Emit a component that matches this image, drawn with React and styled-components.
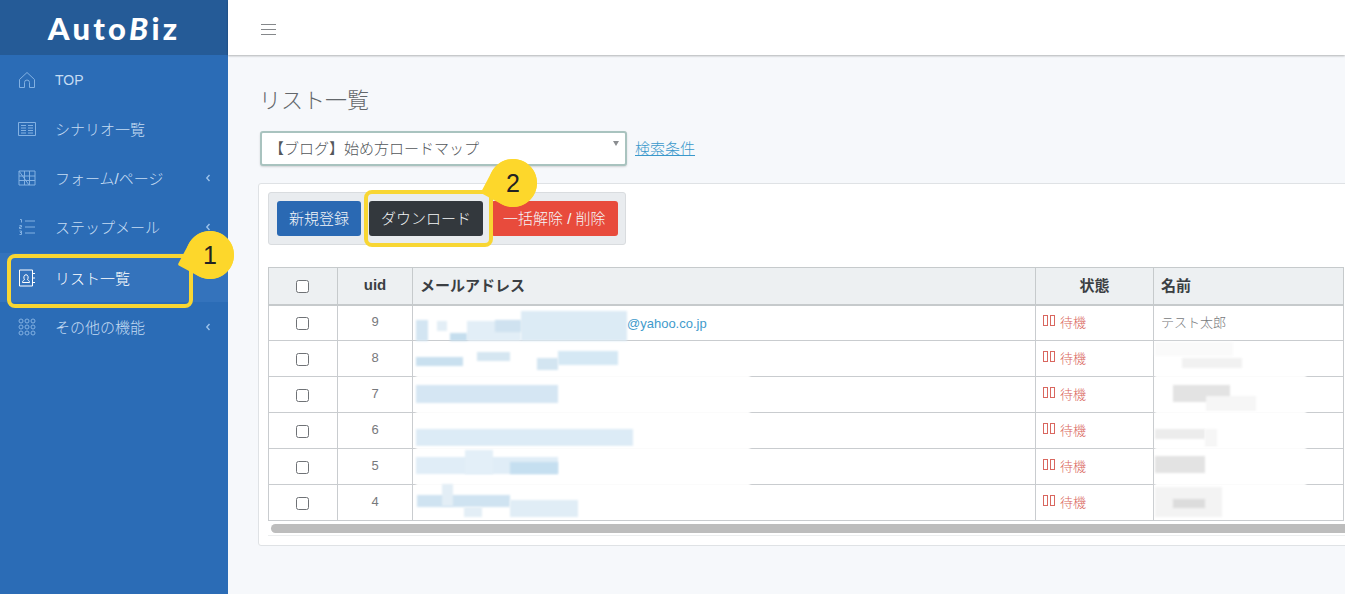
import styled, { createGlobalStyle } from "styled-components"

const GlobalStyle = createGlobalStyle`
  html, body {
    margin: 0;
    height: 100%;
    overflow: hidden;
    background: #f6f8fb;
    font-family: "Liberation Sans", "Noto Sans CJK JP", sans-serif;
  }
  * { box-sizing: border-box; }
`

const navItems = [
  { label: "TOP", icon: HomeIcon, latin: true },
  { label: "シナリオ一覧", icon: TableIcon },
  { label: "フォーム/ページ", icon: FormIcon, more: true },
  { label: "ステップメール", icon: StepIcon, more: true },
  { label: "リスト一覧", icon: ContactIcon, active: true },
  { label: "その他の機能", icon: DotsIcon, more: true },
]

// blurred-out personal data, page coordinates: x, y, w, h, colour
const emailBlur = {
  9: [
    [521, 310, 106, 30, "#dcebf5"],
    [416, 319, 12, 21, "#d3e5f2"],
    [467, 320, 54, 20, "#e2eef7"],
    [495, 319, 26, 12, "#cfe2f0"],
    [450, 332, 17, 8, "#c5deee"],
    [437, 320, 10, 10, "#e3eef6"],
  ],
  8: [
    [416, 357, 47, 9, "#c9e0ef"],
    [477, 352, 33, 9, "#d5e6f1"],
    [537, 358, 21, 12, "#d3e5f1"],
    [558, 351, 60, 14, "#d5e8f4"],
  ],
  7: [
    [416, 375, 334, 4, "#ffffff"],
    [416, 385, 142, 18, "#d5e6f3"],
  ],
  6: [
    [416, 411, 334, 4, "#ffffff"],
    [416, 429, 217, 17, "#dcebf6"],
  ],
  5: [
    [416, 447, 334, 4, "#ffffff"],
    [416, 457, 142, 17, "#e0edf7"],
    [510, 462, 48, 12, "#c5dff0"],
    [465, 450, 28, 24, "#e3eff8"],
  ],
  4: [
    [416, 483, 334, 4, "#ffffff"],
    [417, 495, 93, 12, "#cfe3f1"],
    [510, 500, 68, 17, "#e0edf6"],
    [464, 507, 18, 10, "#e3eef6"],
    [442, 484, 11, 22, "#e3eef6"],
  ],
}

const nameBlur = {
  9: [],
  8: [
    [1182, 358, 60, 10, "#f1f1f1"],
    [1155, 342, 78, 14, "#fafafa"],
  ],
  7: [
    [1155, 375, 151, 4, "#ffffff"],
    [1173, 385, 57, 17, "#e3e3e3"],
    [1206, 396, 50, 16, "#f6f6f6"],
  ],
  6: [
    [1155, 411, 151, 4, "#ffffff"],
    [1155, 429, 50, 10, "#ececec"],
    [1205, 429, 12, 18, "#f6f6f6"],
  ],
  5: [
    [1155, 447, 151, 4, "#ffffff"],
    [1155, 456, 50, 17, "#e3e3e3"],
  ],
  4: [
    [1155, 483, 151, 4, "#ffffff"],
    [1155, 487, 67, 30, "#f3f3f3"],
    [1173, 499, 32, 9, "#dcdcdc"],
  ],
}

const rows = [
  { uid: 9, top: 305, name: "テスト太郎", domain: "@yahoo.co.jp" },
  { uid: 8, top: 341 },
  { uid: 7, top: 377 },
  { uid: 6, top: 413 },
  { uid: 5, top: 449 },
  { uid: 4, top: 485 },
]

export default function App() {
  return (
    <Page>
      <GlobalStyle />
      <Sidebar>
        <Brand>
          Auto<BrandB>B</BrandB>iz
        </Brand>
        <Nav>
          {navItems.map(({ label, icon: Icon, more, active, latin }) => (
            <NavItem key={label} $active={active}>
              <NavIcon $active={active}>
                <Icon />
              </NavIcon>
              <NavLabel $latin={latin}>{label}</NavLabel>
              {more && <Chevron viewBox="0 0 6 8"><path d="M4.5 1 1.8 4l2.7 3" /></Chevron>}
            </NavItem>
          ))}
        </Nav>
      </Sidebar>

      <Main>
        <TopBar>
          <Burger>
            <span />
            <span />
            <span />
          </Burger>
        </TopBar>
        <Content>
          <Title>リスト一覧</Title>
          <FilterRow>
            <SelectBox>
              【ブログ】始め方ロードマップ
              <Caret />
            </SelectBox>
            <SearchLink href="#">検索条件</SearchLink>
          </FilterRow>
          <Card>
            <ButtonGroup>
              <Button $bg="#2a69b3">新規登録</Button>
              <Button $bg="#33383d">ダウンロード</Button>
              <Button $bg="#e84b3c">一括解除 / 削除</Button>
            </ButtonGroup>
            <Table>
              <thead>
                <tr>
                  <HeadCell $w={69} $center>
                    <Check type="checkbox" />
                  </HeadCell>
                  <HeadCell $w={75} $center>uid</HeadCell>
                  <HeadCell $w={623}>メールアドレス</HeadCell>
                  <HeadCell $w={118} $center>状態</HeadCell>
                  <HeadCell $w={190}>名前</HeadCell>
                </tr>
              </thead>
              <tbody>
                {rows.map((row) => (
                  <tr key={row.uid}>
                    <Cell $center>
                      <Check type="checkbox" />
                    </Cell>
                    <Cell $center>{row.uid}</Cell>
                    <Cell>
                      {emailBlur[row.uid].map(([x, y, w, h, c], i) => (
                        <Patch key={i} $x={x - 413} $y={y - row.top} $w={w} $h={h} $c={c} />
                      ))}
                      {row.domain && <Domain>{row.domain}</Domain>}
                    </Cell>
                    <Cell>
                      <Status>
                        <Tofu />
                        <Tofu />
                        <StatusText>待機</StatusText>
                      </Status>
                    </Cell>
                    <Cell>
                      {nameBlur[row.uid].map(([x, y, w, h, c], i) => (
                        <Patch key={i} $x={x - 1154} $y={y - row.top} $w={w} $h={h} $c={c} />
                      ))}
                      {row.name}
                    </Cell>
                  </tr>
                ))}
              </tbody>
            </Table>
            <ScrollTrack>
              <ScrollThumb />
            </ScrollTrack>
          </Card>
        </Content>
      </Main>

      <Highlight $x={7} $y={254} $w={186} $h={54} />
      <Bubble $x={186} $y={231}>1</Bubble>
      <Highlight $x={364} $y={190} $w={129} $h={57} />
      <Bubble $x={489} $y={159}>2</Bubble>
    </Page>
  )
}

function HomeIcon() {
  return (
    <svg viewBox="0 0 18 18">
      <path d="M1.5 8.5 9 1.5l7.5 7v8h-5v-5a2.5 2.5 0 0 0-5 0v5h-5z" />
    </svg>
  )
}

function TableIcon() {
  return (
    <svg viewBox="0 0 18 18">
      <path d="M.5 2.5h17v13H.5zM3 5.5h5M3 8h5M3 10.5h5M3 13h5M10 5.5h5M10 8h5M10 10.5h5M10 13h5" />
    </svg>
  )
}

function FormIcon() {
  return (
    <svg viewBox="0 0 18 18">
      <path d="M1 2h16v14H1zM1 7h16M1 11.500h16M6.500 2v14M11.500 2v14M1 2l10 14" />
    </svg>
  )
}

function StepIcon() {
  return (
    <svg viewBox="0 0 18 18">
      <path d="M7 3h10M7 9h10M7 15h10" />
      <path d="M2 1.500h1.500v3M1.500 7.500h2v1.500h-2v1.500h2M1.500 13h2v1.500h-1.500 1.500v2h-2" />
    </svg>
  )
}

function ContactIcon() {
  return (
    <svg viewBox="0 0 18 18">
      <path d="M1.500 1h13v16h-13zM14.500 4.500h2.500M14.500 9h2.500M14.500 13.500h2.500" />
      <path d="M4.500 13.500c0-1.800 1.200-2.300 2-2.800-1.200-1.700-.8-5 1.500-5s2.700 3.300 1.500 5c.8.500 2 1 2 2.800z" />
    </svg>
  )
}

function DotsIcon() {
  return (
    <svg viewBox="0 0 18 18">
      {[3, 9, 15].flatMap((cy) =>
        [3, 9, 15].map((cx) => <circle key={`${cx}-${cy}`} cx={cx} cy={cy} r="2" />)
      )}
    </svg>
  )
}

const Page = styled.div`
  position: relative;
  display: flex;
  width: 100vw;
  height: 100vh;
  overflow: hidden;
  font-size: 15px;
  font-weight: 300;
  color: #6c7176;
`

const Sidebar = styled.aside`
  flex: 0 0 228px;
  display: flex;
  flex-direction: column;
  background: #2b6cb6;
`

const Brand = styled.div`
  height: 55px;
  display: flex;
  align-items: center;
  justify-content: center;
  background: #255b97;
  color: #fff;
  font-family: "Lato", sans-serif;
  font-size: 31px;
  font-weight: 900;
  letter-spacing: 3.2px;
`

const BrandB = styled.span`
  font-style: italic;
`

const Nav = styled.nav`
  display: flex;
  flex-direction: column;
`

const NavItem = styled.div`
  height: 49px;
  display: flex;
  align-items: center;
  padding: 0 17px 0 18px;
  color: ${(p) => (p.$active ? "#ffffff" : "#c6dcf3")};
  background: ${(p) => (p.$active ? "#3473bc" : "transparent")};
  margin-top: ${(p) => (p.$active ? "2px" : "0")};
`

const NavIcon = styled.span`
  width: 18px;
  height: 18px;
  margin-right: 19px;
  display: block;

  svg {
    display: block;
    width: 18px;
    height: 18px;
    fill: none;
    stroke: ${(p) => (p.$active ? "#ffffff" : "#83b1e2")};
    stroke-width: 1;
  }
`

const NavLabel = styled.span`
  flex: 1;
  font-size: ${(p) => (p.$latin ? "14px" : "15px")};
`

const Chevron = styled.svg`
  width: 6px;
  height: 8px;
  fill: none;
  stroke: #9cc2ea;
  stroke-width: 1.4;
`

const Main = styled.main`
  flex: 1;
  min-width: 0;
  display: flex;
  flex-direction: column;
`

const TopBar = styled.header`
  height: 55px;
  flex: none;
  display: flex;
  align-items: center;
  padding-left: 33px;
  background: #fff;
  box-shadow: 0 1px 2px rgba(0, 0, 0, 0.28);
`

const Burger = styled.div`
  width: 15px;
  display: flex;
  flex-direction: column;
  gap: 4px;
  margin-top: 3px;

  span {
    height: 1px;
    background: #85888b;
  }
`

const Content = styled.div`
  padding: 31px 0 0 31px;
  width: 1150px;
`

const Title = styled.h1`
  margin: 0 0 16px;
  font-size: 22px;
  line-height: 29px;
  font-weight: 300;
  color: #63676b;
`

const FilterRow = styled.div`
  display: flex;
  align-items: center;
  gap: 8px;
  margin-left: 1px;
`

const SelectBox = styled.div`
  position: relative;
  width: 367px;
  height: 35px;
  display: flex;
  align-items: center;
  padding: 0 0 3px 7px;
  background: #fff;
  border: 2px solid #a9c3bf;
  border-radius: 3px;
  box-shadow: 0 1px 2px rgba(0, 0, 0, 0.15);
  color: #53575b;
`

const Caret = styled.span`
  position: absolute;
  top: 8px;
  right: 6px;
  border-style: solid;
  border-width: 5px 3.500px 0;
  border-color: #8a8d90 transparent transparent;
`

const SearchLink = styled.a`
  margin-bottom: 3px;
  color: #3a98cb;
  text-decoration: underline;
`

const Card = styled.section`
  width: 1120px;
  height: 363px;
  margin: 17px 0 0 -1px;
  padding: 8px 0 0 9px;
  background: #fff;
  border: 1px solid #dfe2e5;
  border-radius: 3px;
`

const ButtonGroup = styled.div`
  width: 358px;
  height: 53px;
  display: flex;
  align-items: center;
  gap: 8px;
  padding-left: 8px;
  background: #e9ecef;
  border: 1px solid #d9dcdf;
  border-radius: 3px;
`

const Button = styled.button`
  height: 35px;
  padding: 0 12px 3px;
  border: 0;
  border-radius: 3px;
  background: ${(p) => p.$bg};
  color: #f4f6f8;
  font: inherit;
`

const Table = styled.table`
  width: 1075px;
  margin-top: 22px;
  border-collapse: collapse;
  table-layout: fixed;
  background: #fff;
`

const HeadCell = styled.th`
  width: ${(p) => p.$w}px;
  height: 37px;
  padding: 0 7px 2px;
  background: #edf0f2;
  border: 1px solid #c6cacc;
  border-bottom-width: 2px;
  color: #3b3f43;
  font-weight: 700;
  font-size: 15px;
  text-align: ${(p) => (p.$center ? "center" : "left")};
`

const Cell = styled.td`
  position: relative;
  height: 36px;
  padding: 0 7px 3px;
  border: 1px solid #c9cccf;
  font-size: 13px;
  color: #77797c;
  text-align: ${(p) => (p.$center ? "center" : "left")};
`

const Check = styled.input`
  display: block;
  width: 13px;
  height: 13px;
  margin: 4px 0 0 20px;
  appearance: none;
  background: #fff;
  border: 1px solid #6f7276;
  border-radius: 2.500px;
`

const Patch = styled.span`
  position: absolute;
  left: ${(p) => p.$x}px;
  top: ${(p) => p.$y}px;
  width: ${(p) => p.$w}px;
  height: ${(p) => p.$h}px;
  background: ${(p) => p.$c};
  filter: blur(0.8px);
`

const Domain = styled.span`
  position: absolute;
  left: 214px;
  top: 10px;
  font-size: 13px;
  color: #3f9bcc;
`

const Status = styled.span`
  display: flex;
  align-items: center;
  color: #d9645a;
`

const Tofu = styled.span`
  width: 5px;
  height: 11px;
  margin-right: 1.500px;
  margin-top: -2px;
  border: 1px solid #d9675f;
`

const StatusText = styled.span`
  margin-left: 4px;
`

const ScrollTrack = styled.div`
  width: 1100px;
  height: 15px;
  padding: 3px 0 0 3px;
  border-bottom: 1px solid #eceeef;
`

const ScrollThumb = styled.div`
  height: 9px;
  background: #bdbdbd;
  border-radius: 5px;
`

const Highlight = styled.div`
  position: absolute;
  left: ${(p) => p.$x}px;
  top: ${(p) => p.$y}px;
  width: ${(p) => p.$w}px;
  height: ${(p) => p.$h}px;
  border: 4px solid #f8d633;
  border-radius: 8px;
`

const Bubble = styled.div`
  position: absolute;
  z-index: 1;
  left: ${(p) => p.$x}px;
  top: ${(p) => p.$y}px;
  width: 48px;
  height: 48px;
  display: flex;
  align-items: center;
  justify-content: center;
  border-radius: 50%;
  background: #fdd72b;
  color: #222;
  font-size: 25px;
  font-weight: 400;
  line-height: 1;

  &::before {
    content: "";
    position: absolute;
    left: 0;
    top: 0;
    width: 48px;
    height: 48px;
    background: #fdd72b;
    border-radius: 50% 50% 50% 2px;
    transform: rotate(28deg);
    z-index: -1;
  }
`
